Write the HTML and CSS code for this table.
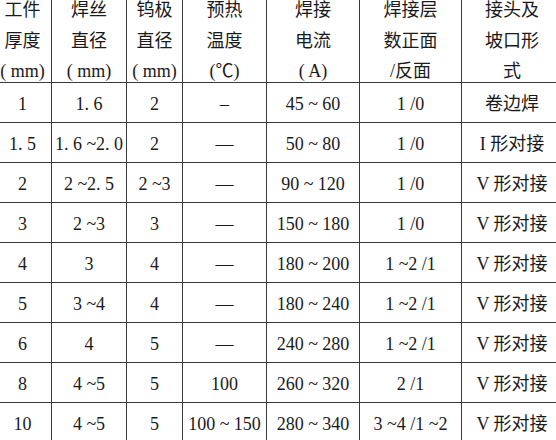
FILE: index.html
```html
<!DOCTYPE html>
<html lang="zh">
<head>
<meta charset="utf-8">
<link rel="stylesheet" href="styles.css">
</head>
<body>
<table class="spec">
  <colgroup>
    <col class="c1"><col class="c2"><col class="c3"><col class="c4"><col class="c5"><col class="c6"><col class="c7">
  </colgroup>
  <thead>
    <tr>
      <th><div class="hd"><div>工件</div><div>厚度</div><div>( mm)</div></div></th>
      <th><div class="hd"><div>焊丝</div><div>直径</div><div>( mm)</div></div></th>
      <th><div class="hd"><div>钨极</div><div>直径</div><div>( mm)</div></div></th>
      <th><div class="hd"><div>预热</div><div>温度</div><div>(℃)</div></div></th>
      <th><div class="hd"><div>焊接</div><div>电流</div><div>( A)</div></div></th>
      <th><div class="hd"><div>焊接层</div><div>数正面</div><div>/反面</div></div></th>
      <th><div class="hd"><div>接头及</div><div>坡口形</div><div>式</div></div></th>
    </tr>
  </thead>
  <tbody>
    <tr><td>1</td><td>1. 6</td><td>2</td><td>–</td><td>45 ~ 60</td><td>1 /0</td><td>卷边焊</td></tr>
    <tr><td>1. 5</td><td>1. 6 ~2. 0</td><td>2</td><td>—</td><td>50 ~ 80</td><td>1 /0</td><td>I 形对接</td></tr>
    <tr><td>2</td><td>2 ~2. 5</td><td>2 ~3</td><td>—</td><td>90 ~ 120</td><td>1 /0</td><td>V 形对接</td></tr>
    <tr><td>3</td><td>2 ~3</td><td>3</td><td>—</td><td>150 ~ 180</td><td>1 /0</td><td>V 形对接</td></tr>
    <tr><td>4</td><td>3</td><td>4</td><td>—</td><td>180 ~ 200</td><td>1 ~2 /1</td><td>V 形对接</td></tr>
    <tr><td>5</td><td>3 ~4</td><td>4</td><td>—</td><td>180 ~ 240</td><td>1 ~2 /1</td><td>V 形对接</td></tr>
    <tr><td>6</td><td>4</td><td>5</td><td>—</td><td>240 ~ 280</td><td>1 ~2 /1</td><td>V 形对接</td></tr>
    <tr><td>8</td><td>4 ~5</td><td>5</td><td>100</td><td>260 ~ 320</td><td>2 /1</td><td>V 形对接</td></tr>
    <tr><td>10</td><td>4 ~5</td><td>5</td><td>100 ~ 150</td><td>280 ~ 340</td><td>3 ~4 /1 ~2</td><td>V 形对接</td></tr>
  </tbody>
</table>
</body>
</html>
```
FILE: styles.css
```css
html, body {
  margin: 0;
  padding: 0;
  background: #fff;
  overflow: hidden;
}
body {
  width: 556px;
  height: 440px;
}
.spec {
  border-collapse: collapse;
  table-layout: fixed;
  width: 569px;
  margin: -6px 0 0 -7px;
  font-family: "Liberation Serif", "Noto Sans CJK SC", serif;
  font-size: 18px;
  color: #1a1a1a;
}
.c1 { width: 58px; }
.c2 { width: 75px; }
.c3 { width: 56px; }
.c4 { width: 84px; }
.c5 { width: 93px; }
.c6 { width: 102px; }
.c7 { width: 101px; }
.spec th,
.spec td {
  border: 1px solid #3a3a3a;
  text-align: center;
  padding: 0;
  white-space: nowrap;
  font-weight: normal;
}
.spec th {
  height: 87px;
  vertical-align: top;
}
.hd {
  height: 87px;
}
.hd > div {
  height: 30.5px;
  line-height: 30.5px;
}
.spec td {
  height: 36px;
  line-height: 20px;
  padding-top: 3px;
  vertical-align: middle;
}
```
